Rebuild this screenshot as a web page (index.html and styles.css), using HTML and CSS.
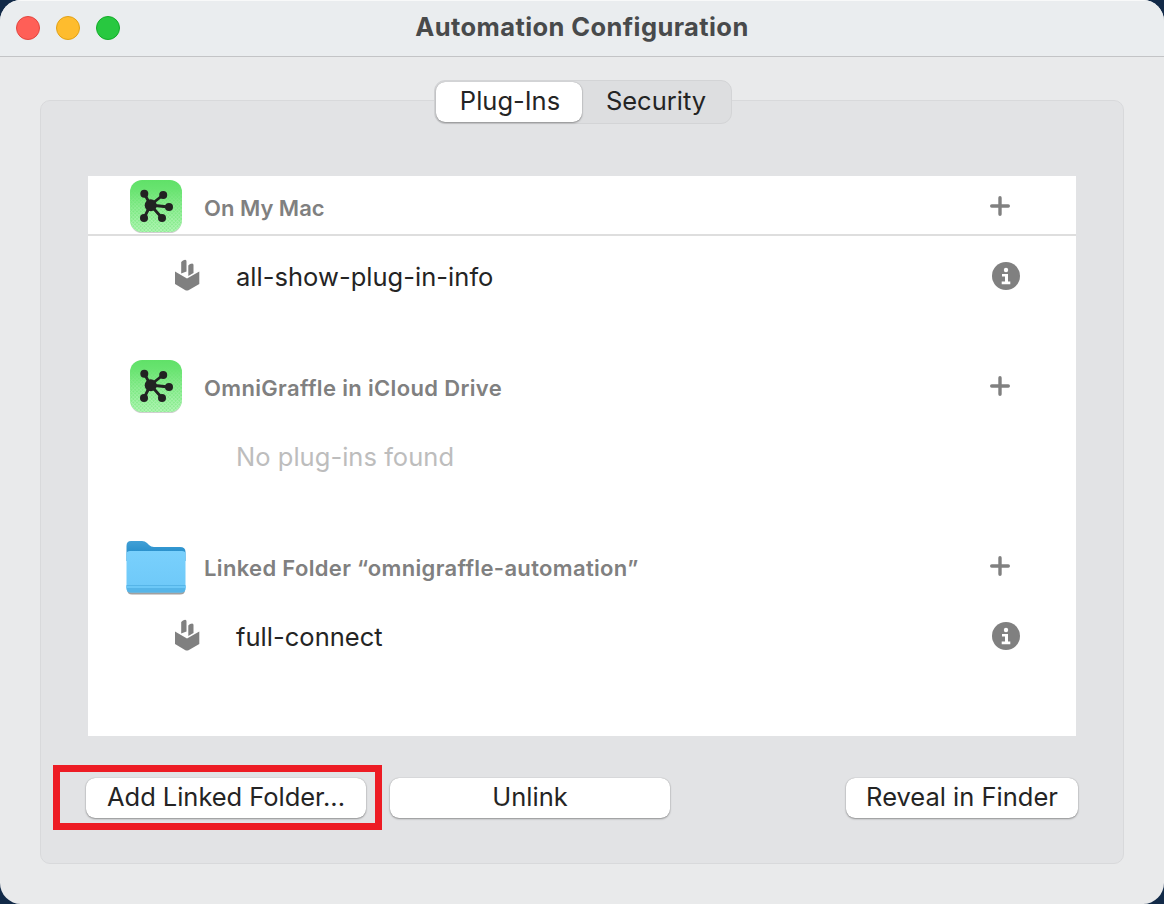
FILE: index.html
```html
<!DOCTYPE html>
<html lang="en">
<head>
<meta charset="utf-8">
<title>Automation Configuration</title>
<link rel="stylesheet" href="styles.css">
</head>
<body>
<svg class="defs" width="0" height="0" aria-hidden="true">
  <defs>
    <linearGradient id="green" x1="0" y1="0" x2="0" y2="1"><stop offset="0" stop-color="#60e168"/><stop offset="1" stop-color="#90ee96"/></linearGradient>
    <linearGradient id="fade" x1="0" y1="0" x2="0" y2="1"><stop offset=".2" stop-color="#fff" stop-opacity="0"/><stop offset="1" stop-color="#fff"/></linearGradient>
    <linearGradient id="blue" x1="0" y1="0" x2="0" y2="1"><stop offset="0" stop-color="#79d0fc"/><stop offset="1" stop-color="#6dc8f8"/></linearGradient>
    <linearGradient id="tab" x1="0" y1="0" x2="0" y2="1"><stop offset="0" stop-color="#41a0d6"/><stop offset="1" stop-color="#1683c4"/></linearGradient>
    <pattern id="mesh" width="2.600" height="2.600" patternUnits="userSpaceOnUse" patternTransform="rotate(45)"><path d="M0 .5H3M.5 0V3" stroke="#c4f9c6" stroke-width=".8"/></pattern>
    <mask id="meshMask"><rect width="60" height="60" fill="url(#fade)"/></mask>
    <symbol id="app" viewBox="0 0 60 60">
      <rect x="4.500" y="5" width="51" height="52" rx="11.500" fill="#bbb" opacity=".7"/>
      <rect x="4" y="4" width="52" height="52" rx="12" fill="url(#green)"/>
      <rect x="4" y="4" width="52" height="52" rx="12" fill="url(#mesh)" mask="url(#meshMask)" opacity=".8"/>
      <g stroke="#222" stroke-width="2.800"><path d="M24.500 29L18.500 18M24.500 29L37 19M24.500 29L42.500 31M24.500 29L18 42M24.500 29L36 42"/></g>
      <g fill="#222"><circle cx="24.700" cy="29.300" r="6"/><circle cx="18.300" cy="17.800" r="4"/><circle cx="37.200" cy="19" r="4"/><circle cx="43" cy="31" r="4"/><circle cx="18" cy="42" r="4"/><circle cx="36" cy="42" r="4"/></g>
    </symbol>
    <symbol id="folder" viewBox="0 0 64 60">
      <path d="M3 10V53Q3 58.500 8 58.500H56Q61 58.500 61 54V16Z" fill="#777" opacity=".7"/>
      <path d="M2.500 10Q2.500 5 7 5H18Q21 5 23 7L25 9Q27 11 30 11H56Q61.500 11 61.500 16V25H2.500Z" fill="url(#tab)"/>
      <path d="M2.500 18Q2.500 15 6 15H58Q61.500 15 61.500 18V52Q61.500 56.500 57 56.500H7Q2.500 56.500 2.500 52Z" fill="url(#blue)"/>
      <path d="M2.500 49H61.500V52Q61.500 56.500 57 56.500H7Q2.500 56.500 2.500 52Z" fill="#56b5e8"/>
      <path d="M2.500 51H61.500" stroke="#6cc8f7" stroke-width="1.800"/>
    </symbol>
    <symbol id="plugin" viewBox="0 0 26 32">
      <path d="M1 12.500L13 19.500 25.300 12.500V25L14.500 31.200Q12.700 32 11 31L1 25Z" fill="#808080"/>
      <path d="M7.200 3L9 1.500Q12.500 -.3 12.500 2.500V12.500L7.200 14.500Z" fill="#808080"/>
      <path d="M14.300 6.500L16 5Q19.500 3.500 19.500 6V14L14.300 17Z" fill="#808080"/>
    </symbol>
    <symbol id="plus" viewBox="0 0 20 20"><path d="M10 1.700V18.300M1.700 10H18.300" stroke="#808080" stroke-width="3.400" stroke-linecap="round"/></symbol>
    <symbol id="info" viewBox="0 0 28 28">
      <circle cx="14" cy="14" r="14" fill="#808080"/><circle cx="14" cy="8" r="2.200" fill="#fff"/>
      <path d="M10 12H16V19.500H18.300V22.200H9.700V19.500H13V14.600H10Z" fill="#fff"/>
    </symbol>
  </defs>
</svg>
<div class="window">
  <header class="titlebar">
    <div class="lights"><i class="light red"></i><i class="light yellow"></i><i class="light green"></i></div>
    <h1 class="title">Automation Configuration</h1>
  </header>
  <main class="content">
    <nav class="tabs">
      <button class="tab active">Plug-Ins</button>
      <button class="tab">Security</button>
    </nav>
    <section class="panel">
      <div class="list">
        <div class="group">
          <div class="head first"><svg class="app"><use href="#app"/></svg><span class="name short">On My Mac</span><svg class="plus"><use href="#plus"/></svg></div>
          <div class="item"><svg class="plugin"><use href="#plugin"/></svg><span class="label">all-show-plug-in-info</span><svg class="info"><use href="#info"/></svg></div>
        </div>
        <div class="group">
          <div class="head"><svg class="app"><use href="#app"/></svg><span class="name">OmniGraffle in iCloud Drive</span><svg class="plus"><use href="#plus"/></svg></div>
          <div class="item empty"><span class="label">No plug-ins found</span></div>
        </div>
        <div class="group">
          <div class="head"><svg class="folder"><use href="#folder"/></svg><span class="name">Linked Folder “omnigraffle-automation”</span><svg class="plus"><use href="#plus"/></svg></div>
          <div class="item"><svg class="plugin"><use href="#plugin"/></svg><span class="label">full-connect</span><svg class="info"><use href="#info"/></svg></div>
        </div>
      </div>
      <footer class="actions">
        <div class="highlight"><button class="btn add">Add Linked Folder...</button></div>
        <button class="btn unlink">Unlink</button>
        <button class="btn reveal">Reveal in Finder</button>
      </footer>
    </section>
  </main>
</div>
</body>
</html>
```
FILE: styles.css
```css
* { box-sizing: border-box; }
html, body { margin: 0; background: #122a48; }
body { font-family: Inter, "Liberation Sans", sans-serif; font-size: 25.5px; color: #242424; width: 1164px; height: 904px; overflow: hidden; }
.defs { position: absolute; }
svg { flex: none; display: block; }
span { white-space: nowrap; }
.window { height: 904px; border-radius: 21px; background: #e9eaeb; overflow: hidden; }
.titlebar { height: 57px; display: grid; grid-template-columns: 200px 1fr 200px; align-items: center; background: #eaedef; border-top: 1px solid #f8f9f9; border-bottom: 1px solid #c3c4c6; }
.lights { display: flex; gap: 16px; padding: 0 0 1px 16px; }
.light { width: 24px; height: 24px; border-radius: 50%; border: 1px solid; }
.red { background: #ff5f57; border-color: #e2463f; }
.yellow { background: #febc2e; border-color: #e1a116; }
.green { background: #28c840; border-color: #12ac28; }
.title { margin: 0; font-size: 25.5px; line-height: 32px; font-weight: 700; letter-spacing: .4px; color: #484a4b; text-align: center; padding-bottom: 3px; }
.content { padding: 23px 40px 40px; display: flex; flex-direction: column; }
.tabs { align-self: center; margin-left: 2px; width: 298px; height: 44px; padding: 1px; display: flex; background: #dddee0; border: 1px solid #d3d4d6; border-radius: 11px; z-index: 1; }
.tab { flex: 1; padding: 0 0 4px; font: inherit; color: inherit; background: none; border: 0; border-radius: 9px; }
.tab.active { flex: 0 0 146px; padding-left: 2px; background: #fff; box-shadow: 0 1px 2px rgba(0,0,0,.35), 0 0 1px rgba(0,0,0,.3); }
.panel { margin-top: -24px; height: 764px; padding: 75px 45px 33px 47px; border: 1px solid #d8d9db; border-radius: 10px; background: #e2e3e5; }
.list { width: 988px; height: 560px; background: #fff; }
.group { height: 180px; }
.head, .item { display: flex; align-items: center; }
.head { height: 60px; padding: 0 66px 0 38px; }
.first { border-bottom: 2px solid #dedede; }
.first .app, .first .plus { margin-top: 2px; }
.app { width: 60px; height: 60px; }
.folder { width: 64px; height: 60px; margin-left: -2px; }
.name { margin-left: 18px; padding-top: 4px; font-size: 22px; font-weight: 600; letter-spacing: .34px; color: #808080; }
.name.short { padding-top: 6px; letter-spacing: 0; }
.folder + .name { margin-left: 16px; }
.plus { width: 20px; height: 20px; margin-left: auto; }
.item { height: 80px; padding: 0 56px 0 86px; }
.plugin { width: 26px; height: 32px; margin: -2px 36px 0 0; }
.info { width: 28px; height: 28px; margin-left: auto; }
.empty { padding-left: 148px; color: #bdbdbd; }
.label { padding-top: 1px; letter-spacing: .03px; }
.actions { display: flex; align-items: center; height: 65px; margin: 29px 0 0 -35px; }
.highlight { width: 329px; height: 65px; border: 7px solid #ed1c24; display: flex; padding: 6px 0 0 26px; }
.btn { height: 40px; padding: 0 0 3px; font: inherit; color: inherit; background: #fff; border: 0; border-radius: 9px; box-shadow: 0 1px 2px rgba(0,0,0,.35), 0 0 1px rgba(0,0,0,.3); }
.add { width: 280px; letter-spacing: -.04px; }
.unlink { width: 280px; margin-left: 8px; }
.reveal { width: 232px; margin-left: auto; }
```
